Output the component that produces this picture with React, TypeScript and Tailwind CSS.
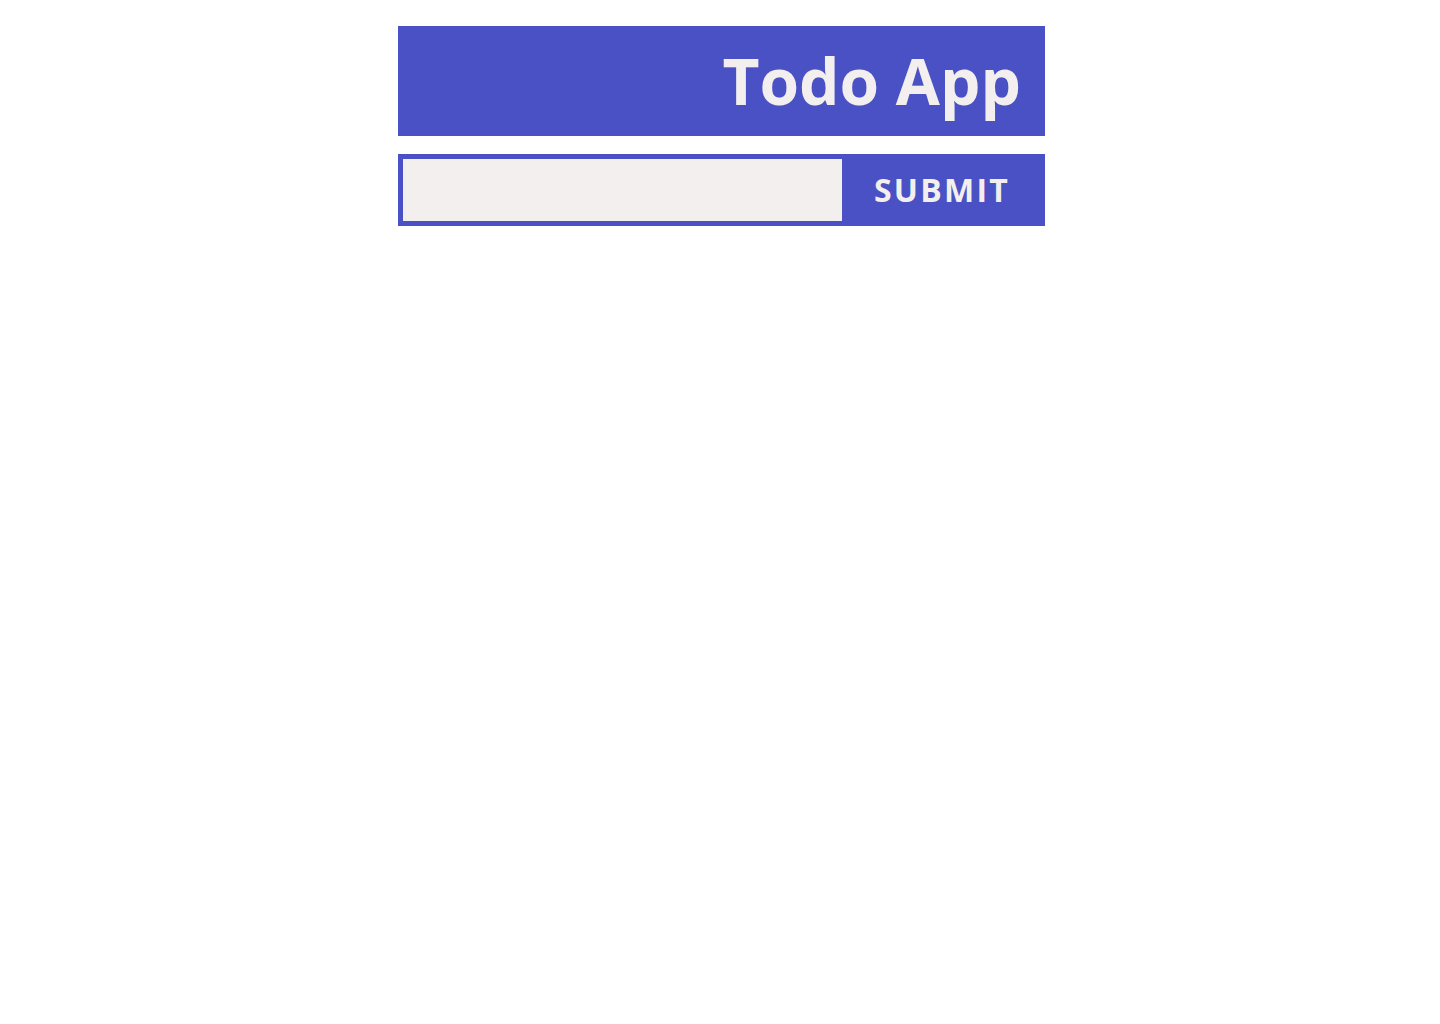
import { useState } from "react";

export default function App() {
  const [text, setText] = useState("");
  const [todos, setTodos] = useState<string[]>([]);

  const handleSubmit = (e: React.FormEvent<HTMLFormElement>) => {
    e.preventDefault();
    if (!text.trim()) return;
    setTodos([...todos, text.trim()]);
    setText("");
  };

  return (
    <div className="min-h-screen bg-white font-['Open_Sans',sans-serif]">
      <div className="flex flex-col items-center pt-[26px] pl-[3px]">
        <div className="w-[647px]">
          <header className="h-[110px] bg-[#4a51c4] flex items-center justify-end pr-[24px]">
            <h1 className="text-[64px] font-bold text-[#f3efee] leading-none">
              Todo App
            </h1>
          </header>
          <form
            onSubmit={handleSubmit}
            className="mt-[18px] h-[72px] flex border-[5px] border-[#4a51c4] bg-[#4a51c4]">
            <input
              value={text}
              onChange={(e) => setText(e.target.value)}
              className="flex-1 bg-[#f3efee] outline-none px-3 text-xl"
            />
            <button
              type="submit"
              className="w-[198px] pl-[2px] text-[32px] font-bold uppercase tracking-[0.07em] text-[#f3efee] leading-none">
              Submit
            </button>
          </form>
          <ul>
            {todos.map((todo, i) => (
              <li key={i} className="py-2 text-lg">
                {todo}
              </li>
            ))}
          </ul>
        </div>
      </div>
    </div>
  );
}
